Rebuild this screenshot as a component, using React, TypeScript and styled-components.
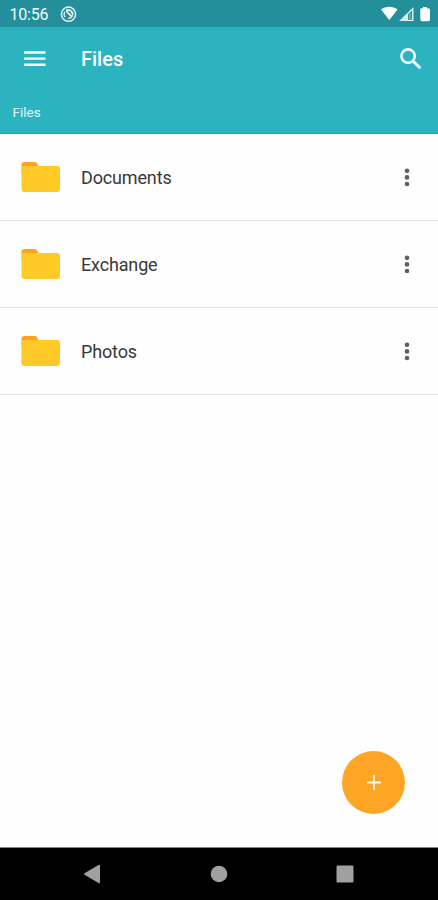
import React from "react";
import styled, { createGlobalStyle } from "styled-components";

const GlobalStyle = createGlobalStyle`
  * { box-sizing: border-box; }
  body { margin: 0; background: #fff; font-family: Roboto, "Noto Sans", sans-serif; }
  svg { display: block; }
  button { border: 0; padding: 0; background: none; font: inherit; }
`;

const Screen = styled.div`
  width: 100%;
  height: 900px;
  display: flex;
  flex-direction: column;
  overflow: hidden;
  background: #fefefe;
`;

const StatusBar = styled.div`
  flex: none;
  height: 27px;
  display: flex;
  align-items: center;
  padding: 1px 8px 0 9.5px;
  background: #228f9a;
  color: #f4fbfb;
`;

const Clock = styled.span`
  width: 50px;
  padding-top: 1px;
  font-size: 16px;
  line-height: 26px;
  letter-spacing: -0.2px;
`;

const StatusIcons = styled.div`
  margin: 0 -0.5px 0 auto;
`;

const Header = styled.header`
  flex: none;
  height: 107px;
  background: #2bb3c0;
  color: #fff;
  border-bottom: 1px solid #22a8b4;
`;

const Toolbar = styled.div`
  height: 64px;
  display: flex;
  align-items: center;
  padding: 0 16px 0 24px;
`;

const IconButton = styled.button<{ $color?: string }>`
  display: flex;
  color: ${(p) => p.$color ?? "#f4fdfd"};
`;

const Title = styled.h1`
  margin: 0 0 0 35px;
  flex: 1;
  font-size: 20px;
  line-height: 24px;
  font-weight: 500;
`;

const Breadcrumb = styled.div`
  padding: 12px 12.5px 0;
  font-size: 13.5px;
  line-height: 18px;
  color: #e3f7f8;
`;

const List = styled.ul`
  flex: 1;
  margin: 0;
  padding: 0;
  list-style: none;
`;

const Row = styled.li`
  height: 87px;
  display: flex;
  align-items: center;
  padding: 0 28px 0 21px;
  border-bottom: 1px solid #e6e6e6;
`;

const FileName = styled.span`
  flex: 1;
  margin: 2px 0 0 20px;
  font-size: 18px;
  line-height: 24px;
  letter-spacing: -0.15px;
  color: #383838;
`;

const AddButton = styled.button`
  position: absolute;
  left: 342px;
  top: 751px;
  width: 63px;
  height: 63px;
  border-radius: 50%;
  display: flex;
  align-items: center;
  justify-content: center;
  background: #ffa526;
`;

const NavBar = styled.nav`
  flex: none;
  height: 53px;
  display: flex;
  align-items: center;
  justify-content: space-between;
  padding: 0 84px 0 83px;
  background: #000;
  border-top: 1px solid #858585;
`;

const NavButton = styled.button`
  display: flex;
`;

const SyncIcon = () => (
  <svg width="17" height="17" viewBox="0 0 17 17" fill="none" stroke="#e8f5f6">
    <circle cx="8.5" cy="8.2" r="7.1" strokeWidth="1.5" />
    <path d="M5.2 11A4.5 4.5 0 0 1 4.7 5.9M12.4 6A4.5 4.5 0 0 1 8 12.4" strokeWidth="1.3" />
    <path d="M6.2 5.2L12 10.8M6 4.4C9 3 12 5 12.6 8" strokeWidth="1.7" />
  </svg>
);

const SignalIcons = () => (
  <svg width="51" height="16" viewBox="0 0 51 16" fill="#fff">
    <path d="M1 3.6C5.5-.1 13 -.1 17.5 3.6L9.3 14Z" />
    <path fill="#d9edee" fillRule="evenodd" d="M19 15L33.5 1V15ZM28 8.3V13.7H32V4.4Z" />
    <path fill="#62afb7" d="M28.8 8.5L31.2 6.2V13H28.8Z" />
    <path d="M41.3 2.3H43V1H47V2.3H48.3Q50 2.3 50 4V13.6Q50 15.2 48.3 15.2H42Q40.3 15.2 40.3 13.6V4Q40.3 2.3 41.3 2.3Z" />
  </svg>
);

const MenuIcon = () => (
  <svg width="22" height="16" viewBox="0 0 22 16" fill="currentColor">
    <path d="M0 .3H21.5V2.7H0ZM0 6.4H21.5V8.8H0ZM0 12.6H21.5V15H0Z" />
  </svg>
);

const SearchIcon = () => (
  <svg width="22" height="22" viewBox="0 0 22 22" fill="none" stroke="currentColor">
    <circle cx="8.1" cy="8.1" r="6.7" strokeWidth="2.6" />
    <path d="M13 13L20.3 20.3" strokeWidth="3" />
  </svg>
);

const FolderIcon = () => (
  <svg width="40" height="32" viewBox="0 0 40 32">
    <path fill="#ffa21f" d="M3.3 1H13.5Q15 1 16 2.3L18 6V12H.5V4Q.5 1 3.3 1Z" />
    <path fill="#ffc928" d="M3.5 5H36Q39 5 39 8V28Q39 31 36 31H3.5Q.5 31 .5 28V8Q.5 5 3.5 5Z" />
  </svg>
);

const MoreIcon = () => (
  <svg width="6" height="20" viewBox="0 0 6 20" fill="currentColor">
    <circle cx="3" cy="3.8" r="2.35" />
    <circle cx="3" cy="10.4" r="2.35" />
    <circle cx="3" cy="17" r="2.35" />
  </svg>
);

const PlusIcon = () => (
  <svg width="14" height="16" viewBox="0 0 14 16" stroke="#fff8e8" strokeWidth="2">
    <path d="M0 7.5H14M7 .3V14.7" />
  </svg>
);

const files = ["Documents", "Exchange", "Photos"];

export default function App() {
  return (
    <Screen>
      <GlobalStyle />
      <StatusBar>
        <Clock>10:56</Clock>
        <SyncIcon />
        <StatusIcons>
          <SignalIcons />
        </StatusIcons>
      </StatusBar>
      <Header>
        <Toolbar>
          <IconButton aria-label="Menu"><MenuIcon /></IconButton>
          <Title>Files</Title>
          <IconButton aria-label="Search"><SearchIcon /></IconButton>
        </Toolbar>
        <Breadcrumb>Files</Breadcrumb>
      </Header>
      <List>
        {files.map((name) => (
          <Row key={name}>
            <FolderIcon />
            <FileName>{name}</FileName>
            <IconButton $color="#606060" aria-label={`Options for ${name}`}><MoreIcon /></IconButton>
          </Row>
        ))}
      </List>
      <AddButton aria-label="Add"><PlusIcon /></AddButton>
      <NavBar>
        <NavButton aria-label="Back">
          <svg width="18" height="20" viewBox="0 0 18 20" fill="#a0a0a0">
            <path d="M1.5 9.2L15.5 1Q17 .3 17 2V18Q17 19.7 15.5 19L1.5 10.8Q.5 10 1.5 9.2Z" />
          </svg>
        </NavButton>
        <NavButton aria-label="Home">
          <svg width="18" height="18" viewBox="0 0 18 18" fill="#a0a0a0">
            <circle cx="9" cy="9" r="8.3" />
          </svg>
        </NavButton>
        <NavButton aria-label="Recent apps">
          <svg width="18" height="18" viewBox="0 0 18 18" fill="#a0a0a0">
            <rect x=".5" y=".5" width="17" height="17" rx="1.2" />
          </svg>
        </NavButton>
      </NavBar>
    </Screen>
  );
}
